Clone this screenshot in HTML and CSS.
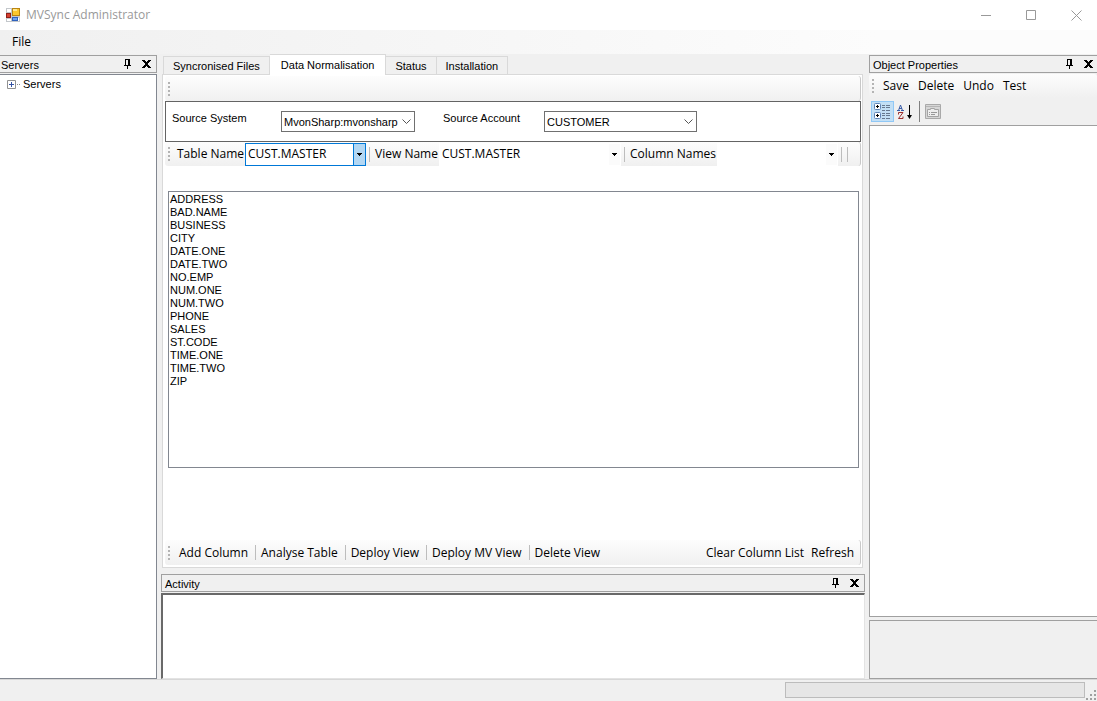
FILE: index.html
```html
<!DOCTYPE html>
<html lang="en">
<head>
  <meta charset="UTF-8" />
  <title>MVSync Administrator</title>
  <link rel="stylesheet" href="styles.css">
</head>
<body>
  <!-- shared glyphs for the dock panels and combos -->
  <svg class="defs" aria-hidden="true">
    <symbol id="pin" viewBox="0 0 9 10"><path d="M2 0h5v6h1v1H5v3H4V7H1V6h1zM3 1v5h2V1z" fill="#000" fill-rule="evenodd"/></symbol>
    <symbol id="cross" viewBox="0 0 9 8"><path d="M0 0h3v1H0zM6 0h3v1H6zM1 1h3v1H1zM5 1h3v1H5zM2 2h5v1H2zM3 3h3v2H3zM2 5h5v1H2zM1 6h3v1H1zM5 6h3v1H5zM0 7h3v1H0zM6 7h3v1H6z" fill="#000"/></symbol>
    <symbol id="chevron" viewBox="0 0 9 6"><path d="M.5.5l4 4 4-4" fill="none" stroke="#555"/></symbol>
    <symbol id="arrow" viewBox="0 0 5 3"><path d="M0 0h5v1H4v1H3v1H2V2H1V1H0z" fill="#000"/></symbol>
  </svg>

  <header class="titlebar">
    <svg class="app-icon" width="14" height="14" viewBox="0 0 14 14" shape-rendering="crispEdges">
      <path d="M0 0h14v14H0z" fill="#c3c7cb"/>
      <path d="M1 1h4v3H1zM1 11h4v2H1zM12 10h1v3h-1z" fill="#fff"/>
      <path d="M6 0h8v8H6z" fill="#b98512"/>
      <path d="M7 1h6v6H7z" fill="#fbc72c"/>
      <path d="M7 1h4v2H7z" fill="#ffe68c"/>
      <path d="M0 5h5v5H0z" fill="#8f1f18"/>
      <path d="M1 6h3v3H1z" fill="#d6402f"/>
      <path d="M6 9h6v4H6z" fill="#2e61bd"/>
      <path d="M7 10h4v2H7z" fill="#6ea3ee"/>
    </svg>
    <h1>MVSync Administrator</h1>
    <div class="window-buttons">
      <button aria-label="Minimize"><svg width="11" height="11"><path d="M0 5.500h10" stroke="#999"/></svg></button>
      <button aria-label="Maximize"><svg width="11" height="11"><path d="M.5.5h9v9h-9z" fill="none" stroke="#999"/></svg></button>
      <button aria-label="Close"><svg width="11" height="11"><path d="M.5.5l10 10M10.500.5l-10 10" stroke="#999"/></svg></button>
    </div>
  </header>

  <nav class="menubar"><button>File</button></nav>

  <main class="workspace">
    <aside class="dock servers">
      <div class="dock-title">
        <h2>Servers</h2>
        <button aria-label="Auto hide"><svg width="9" height="10"><use href="#pin"/></svg></button>
        <button aria-label="Close"><svg width="9" height="8"><use href="#cross"/></svg></button>
      </div>
      <ul class="tree">
        <li>
          <button aria-label="Expand">
            <svg width="13" height="9" viewBox="0 0 13 9"><path d="M.5.5h8v8h-8z" fill="#fff" stroke="#919191"/><path d="M2 4.500h5M4.500 2v5" stroke="#3452a4"/><path d="M10 4.500h1M12 4.500h1" stroke="#888"/></svg>
          </button>
          Servers
        </li>
      </ul>
    </aside>

    <div class="center">
      <div class="tabs" role="tablist">
        <button role="tab">Syncronised Files</button>
        <button role="tab" class="active" aria-selected="true">Data Normalisation</button>
        <button role="tab">Status</button>
        <button role="tab">Installation</button>
      </div>

      <section class="tab-page">
        <div class="toolstrip"><span class="grip"></span></div>

        <div class="source">
          <label for="system">Source System</label>
          <div class="combo">
            <select id="system"><option>MvonSharp:mvonsharp</option></select>
            <svg width="9" height="6"><use href="#chevron"/></svg>
          </div>
          <label for="account">Source Account</label>
          <div class="combo">
            <select id="account"><option>CUSTOMER</option></select>
            <svg width="9" height="6"><use href="#chevron"/></svg>
          </div>
        </div>

        <div class="toolstrip filters">
          <span class="grip"></span>
          <label for="table">Table Name</label>
          <div class="combo flat focused">
            <select id="table"><option>CUST.MASTER</option></select>
            <span class="drop"><svg width="5" height="3"><use href="#arrow"/></svg></span>
          </div>
          <span class="sep"></span>
          <label for="view">View Name</label>
          <div class="combo flat wide">
            <select id="view"><option>CUST.MASTER</option></select>
            <span class="drop"><svg width="5" height="3"><use href="#arrow"/></svg></span>
          </div>
          <span class="sep"></span>
          <label for="columns">Column Names</label>
          <div class="combo flat">
            <select id="columns"><option></option></select>
            <span class="drop"><svg width="5" height="3"><use href="#arrow"/></svg></span>
          </div>
          <span class="sep"></span>
          <span class="sep"></span>
        </div>

        <select class="column-list" multiple aria-label="Columns">
          <option>ADDRESS</option>
          <option>BAD.NAME</option>
          <option>BUSINESS</option>
          <option>CITY</option>
          <option>DATE.ONE</option>
          <option>DATE.TWO</option>
          <option>NO.EMP</option>
          <option>NUM.ONE</option>
          <option>NUM.TWO</option>
          <option>PHONE</option>
          <option>SALES</option>
          <option>ST.CODE</option>
          <option>TIME.ONE</option>
          <option>TIME.TWO</option>
          <option>ZIP</option>
        </select>

        <div class="toolstrip actions">
          <span class="grip"></span>
          <button>Add Column</button>
          <span class="sep"></span>
          <button>Analyse Table</button>
          <span class="sep"></span>
          <button>Deploy View</button>
          <span class="sep"></span>
          <button>Deploy MV View</button>
          <span class="sep"></span>
          <button>Delete View</button>
          <span class="spacer"></span>
          <button>Clear Column List</button>
          <button>Refresh</button>
        </div>
      </section>

      <section class="dock activity">
        <div class="dock-title">
          <h2>Activity</h2>
          <button aria-label="Auto hide"><svg width="9" height="10"><use href="#pin"/></svg></button>
          <button aria-label="Close"><svg width="9" height="8"><use href="#cross"/></svg></button>
        </div>
        <textarea aria-label="Activity"></textarea>
      </section>
    </div>

    <aside class="dock properties">
      <div class="dock-title">
        <h2>Object Properties</h2>
        <button aria-label="Auto hide"><svg width="9" height="10"><use href="#pin"/></svg></button>
        <button aria-label="Close"><svg width="9" height="8"><use href="#cross"/></svg></button>
      </div>
      <div class="toolstrip">
        <span class="grip"></span>
        <button>Save</button>
        <button>Delete</button>
        <button>Undo</button>
        <button>Test</button>
      </div>
      <div class="grid-tools">
        <button class="on" aria-label="Categorized">
          <svg width="17" height="17" viewBox="0 0 17 17">
            <rect x=".5" y=".5" width="6" height="6" rx="1" fill="#fff" stroke="#5f83b5"/>
            <rect x=".5" y="9.500" width="6" height="6" rx="1" fill="#fff" stroke="#5f83b5"/>
            <path d="M2 3.500h3M3.500 2v3M2 12.500h3M3.500 11v3" stroke="#000"/>
            <path d="M8 2.500h3M12 2.500h4M8 4.500h3M12 4.500h4M8 7.500h3M12 7.500h4M8 10.500h3M12 10.500h4M8 12.500h3M12 12.500h4M8 15.500h3M12 15.500h4" stroke="#66788f"/>
          </svg>
        </button>
        <button aria-label="Alphabetical">
          <svg width="16" height="16" viewBox="0 0 16 16">
            <path d="M0 6.500h3M4 6.500h3M1.500 6.500L3.500 1l2 5.500M2 4.500h3" fill="none" stroke="#3a5da8"/>
            <path d="M1.500 10.500v-2h4.500L1.500 14.500H6v-2" fill="none" stroke="#9c2f2f"/>
            <path d="M12.500 1v12" stroke="#000"/>
            <path d="M10 11h5l-2.500 4z"/>
          </svg>
        </button>
        <span class="sep"></span>
        <button aria-label="Property pages">
          <svg width="16" height="15" viewBox="0 0 16 15">
            <path d="M.5.5h15v14H.5z" fill="#d6d6d6" stroke="#a9a9a9"/>
            <path d="M1 2.500h14" stroke="#b5b5b5"/>
            <path d="M2.500 5.500h3v-1h4v1h4v7h-11z" fill="#eee" stroke="#a4a4a4"/>
            <path d="M4 8.500h1M6 8.500h6M4 10.500h1M6 10.500h4" stroke="#999"/>
          </svg>
        </button>
      </div>
      <div class="property-grid"></div>
      <div class="property-help"></div>
    </aside>
  </main>

  <footer class="statusbar">
    <progress value="0" max="100" aria-label="Progress"></progress>
    <svg width="11" height="11" viewBox="0 0 11 11"><path d="M8 0h2v2H8zM4 4h2v2H4zM8 4h2v2H8zM0 8h2v2H0zM4 8h2v2H4zM8 8h2v2H8z" fill="#a0a0a0"/></svg>
  </footer>
</body>
</html>
```

FILE: styles.css
```css
* {
  box-sizing: border-box;
}
body {
  margin: 0;
  height: 100vh;
  display: flex;
  flex-direction: column;
  overflow: hidden;
  background: #f0f0f0;
  color: #000;
  font: 11px/14px "Liberation Sans", Arial, sans-serif;
}
button,
select,
textarea {
  font: inherit;
  color: inherit;
  margin: 0;
  padding: 0;
  border: 0;
  border-radius: 0;
  background: none;
}
h1,
h2 {
  margin: 0;
  font-size: inherit;
  font-weight: normal;
}
svg {
  display: block;
}
.defs {
  position: absolute;
  width: 0;
  height: 0;
}

/* title bar and menu */
.titlebar {
  display: flex;
  align-items: center;
  height: 30px;
  padding: 0 15px 0 6px;
  background: #fff;
  color: #999;
  font: 12px/16px "Open Sans", "Segoe UI", sans-serif;
}
.titlebar h1 {
  flex: 1;
  margin-left: 6px;
}
.window-buttons {
  display: flex;
  gap: 34px;
}
.menubar {
  display: flex;
  align-items: center;
  height: 24px;
  padding-left: 12px;
  background: linear-gradient(to right, #f0f0f0, #fcfcfc 80%);
  font: 12px/16px "Open Sans", "Segoe UI", sans-serif;
}

/* docked layout */
.workspace {
  flex: 1;
  min-height: 0;
  display: grid;
  grid-template-columns: 157px minmax(0, 1fr) 228px;
  gap: 4px;
}
.dock {
  display: flex;
  flex-direction: column;
  min-height: 0;
}
.servers,
.properties {
  padding-top: 1px;
}
.dock-title {
  display: flex;
  align-items: center;
  gap: 10px;
  flex: none;
  height: 18px;
  margin-bottom: 1px;
  padding: 0 5px 0 3px;
  border: 1px solid #a0a0a0;
}
.dock-title h2 {
  flex: 1;
  padding-top: 1px;
}
.servers .dock-title {
  padding-left: 1px;
  border-left: 0;
}
.properties .dock-title {
  padding-right: 4px;
  border-right: 0;
}
.tree {
  flex: 1;
  margin: 0;
  padding: 2px 7px;
  list-style: none;
  background: #fff;
  border: 1px solid #828790;
  border-left: 0;
}
.tree li {
  display: flex;
  align-items: center;
  gap: 3px;
}

/* tab control */
.center {
  display: flex;
  flex-direction: column;
  min-height: 0;
}
.tabs {
  display: flex;
  align-items: flex-end;
  height: 21px;
  margin-bottom: -1px;
  padding-left: 2px;
  z-index: 1;
}
.tabs button {
  height: 19px;
  padding: 0 9px;
  border: 1px solid #d9d9d9;
  border-left-width: 0;
}
.tabs button:first-child {
  border-left-width: 1px;
}
.tabs .active {
  height: 21px;
  padding: 0 11px 1px;
  background: #fff;
  border-bottom: 0;
}
.tab-page {
  flex: 1;
  display: flex;
  flex-direction: column;
  min-height: 0;
  margin: 0 2px 6px 1px;
  padding: 1px 1px 2px 2px;
  background: #fff;
  border: 1px solid #d9d9d9;
}

/* tool strips */
.toolstrip {
  display: flex;
  align-items: center;
  flex: none;
  height: 25px;
  padding-left: 3px;
  background: linear-gradient(#fdfdfd, #f0f0f0);
  border-right: 1px solid #c8c8c8;
  border-radius: 3px;
  font: 12px/16px "Open Sans", "Segoe UI", sans-serif;
}
.grip {
  width: 2px;
  height: 14px;
  margin-right: 4px;
  background: repeating-linear-gradient(#b4b4b4 0 2px, transparent 2px 4px);
}
.toolstrip label {
  padding: 0 1px 0 3px;
  white-space: nowrap;
}
.toolstrip button {
  padding: 0 4px 0 5px;
  white-space: nowrap;
}
.sep {
  flex: none;
  width: 1px;
  height: 15px;
  margin: 0 2px 0 3px;
  background: #bdbdbd;
}
.spacer {
  flex: 1;
}

/* combo boxes */
.combo {
  position: relative;
  height: 21px;
}
.combo select {
  appearance: none;
  width: 100%;
  height: 100%;
  padding: 0 15px 0 2px;
  background: #fff;
  border: 1px solid #707070;
}
.combo > svg {
  position: absolute;
  right: 4px;
  top: 8px;
  pointer-events: none;
}
.flat {
  width: 121px;
  height: 23px;
}
.flat select {
  padding: 0 12px 0 2px;
  border-color: transparent;
}
.wide {
  flex: 1;
}
.drop {
  position: absolute;
  top: 1px;
  right: 1px;
  bottom: 1px;
  width: 11px;
  display: flex;
  align-items: center;
  justify-content: center;
  background: #fbfbfb;
  pointer-events: none;
}
.focused select {
  border-color: #0078d7;
}
.focused .drop {
  width: 12px;
  background: #b3d7f3;
  border-left: 1px solid #0078d7;
}

/* data normalisation page */
.source {
  display: grid;
  grid-template-columns: 81px 134px 73px 153px;
  column-gap: 28px;
  align-items: start;
  flex: none;
  height: 41px;
  padding: 9px 6px;
  border: 1px solid #646464;
}
.source label {
  white-space: nowrap;
}
.filters {
  height: 24px;
  padding-right: 10px;
}
.column-list {
  flex: 1;
  min-height: 0;
  margin: 25px 2px 72px 3px;
  padding: 1px 0;
  background: #fff;
  border: 1px solid #828790;
}
.column-list option {
  height: 13px;
  min-height: 13px;
  padding: 0 1px;
  line-height: 13px;
}
.actions {
  padding-right: 2px;
}
.actions .grip {
  margin-right: 6px;
}
.actions button {
  padding: 0 4px 0 3px;
}

/* activity log */
.activity {
  flex: none;
  height: 105px;
}
.activity textarea {
  flex: 1;
  background: #fff;
  border: 1px solid #e3e3e3;
  border-top: 2px solid #696969;
  border-left: 2px solid #696969;
  resize: none;
}

/* object properties */
.properties .toolstrip {
  height: 24px;
  border-right: 0;
}
.grid-tools {
  display: flex;
  align-items: center;
  flex: none;
  height: 27px;
  padding-left: 2px;
}
.grid-tools button {
  display: flex;
  align-items: center;
  justify-content: center;
  width: 22px;
  height: 21px;
}
.grid-tools .on {
  width: 23px;
  background: #c2dff5;
  border: 1px solid #90c8f6;
}
.grid-tools .sep {
  height: 21px;
  background: #808080;
}
.property-grid {
  flex: 1;
  background: #fff;
  border: 1px solid #a0a0a0;
  border-right: 0;
}
.property-help {
  flex: none;
  height: 59px;
  margin-top: 3px;
  border: 1px solid #a0a0a0;
  border-right: 0;
}

/* status bar */
.statusbar {
  display: flex;
  justify-content: flex-end;
  gap: 1px;
  height: 22px;
  padding-top: 2px;
  border-top: 1px solid #d7d7d7;
}
.statusbar progress {
  appearance: none;
  width: 300px;
  height: 16px;
  border: 1px solid #bcbcbc;
  background: #e6e6e6;
}
.statusbar progress::-webkit-progress-bar {
  background: #e6e6e6;
}
.statusbar svg {
  align-self: flex-end;
}
```
